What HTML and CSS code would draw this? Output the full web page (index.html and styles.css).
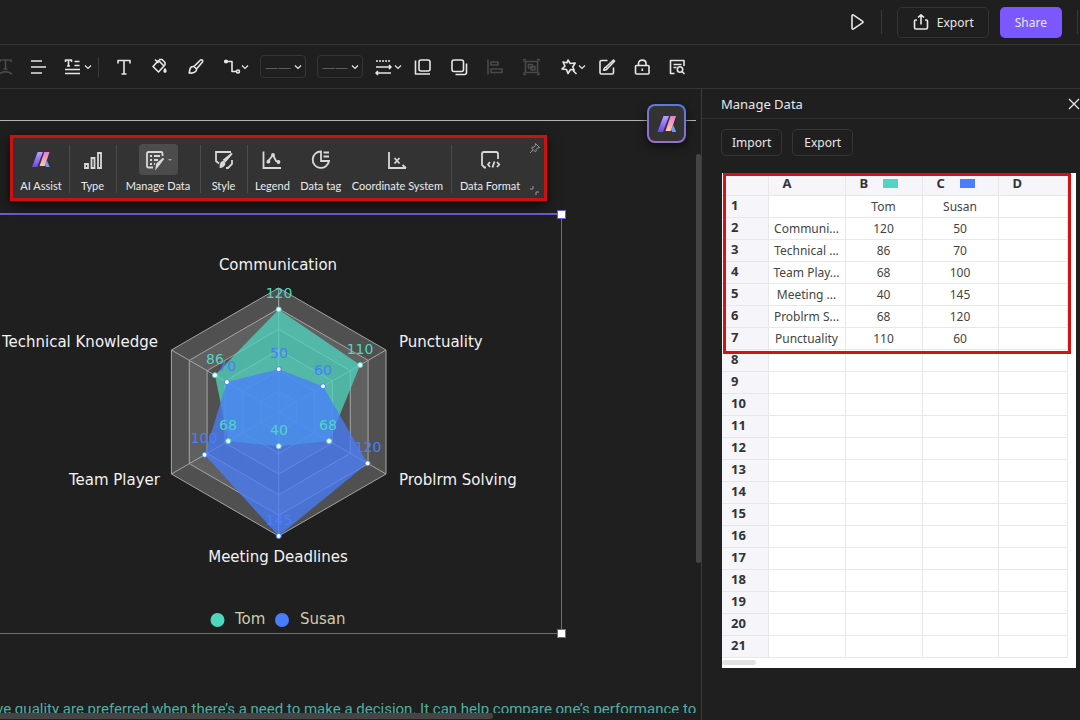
FILE: index.html
```html
<!DOCTYPE html>
<html lang="en">
<head>
<meta charset="utf-8">
<title>Manage Data</title>
<link rel="stylesheet" href="styles.css">
</head>
<body>
<svg width="0" height="0" class="defs" aria-hidden="true">
  <defs>
    <linearGradient id="g-left" x1="0" y1="0" x2="0" y2="1"><stop offset="0" stop-color="#b9a2ff"/><stop offset="1" stop-color="#6a45f0"/></linearGradient>
    <linearGradient id="g-right" x1="0" y1="0" x2="0" y2="1"><stop offset="0" stop-color="#e77bd8"/><stop offset="1" stop-color="#ffc9a0"/></linearGradient>
    <symbol id="logo" viewBox="0 0 20 18">
      <path d="M6.500 1h5.500L6 17H.5z" fill="url(#g-left)"/>
      <path d="M13.500 1h5.500L14 16H8.500z" fill="url(#g-right)"/>
      <path d="M16.300 10l2.900 7h-3.900L14 14z" fill="#6d9cf5"/>
    </symbol>
    <symbol id="chev" viewBox="0 0 8 8"><path d="M1 2.500l3 3 3-3"/></symbol>
  </defs>
</svg>
<div class="app">
  <header class="topbar">
    <button class="icon-btn" aria-label="Play"><svg class="ic" viewBox="0 0 18 18"><path d="M4 3c0-1 .8-1.400 1.600-.9l8.800 6c.8.500.8 1.300 0 1.800l-8.800 6C4.800 16.400 4 16 4 15z"/></svg></button>
    <span class="sep"></span>
    <button class="export-btn"><svg class="ic" viewBox="0 0 18 18"><path d="M5 7H3.500C2.700 7 2.500 7.500 2.500 8v6.500c0 .8.500 1.500 1.500 1.500h10c1 0 1.500-.7 1.500-1.500V8c0-.5-.2-1-1-1H13M9 11.500V2M6 4.500L9 1.800l3 2.700"/></svg>Export</button>
    <button class="share-btn">Share</button>
    <span class="sep last"></span>
  </header>

  <nav class="tools" aria-label="Formatting">
    <div class="group g-text">
      <button class="icon-btn dim" aria-label="Text on path"><svg class="ic" viewBox="0 0 18 18"><path d="M4 4V2h11v2M9.500 2v9M7.500 11h4M3 16c4-3 9-3 13 0"/></svg></button>
      <button class="icon-btn" aria-label="Align"><svg class="ic" viewBox="0 0 18 18"><path d="M1 3h11M1 9h15M1 15h11"/></svg></button>
      <button class="icon-btn drop" aria-label="Text layout"><svg class="ic" viewBox="0 0 18 18"><path d="M1.500 4V2h6v2M4.500 2v6M3 8h3M10.500 3.500h5M10.500 7.500h5M1 11.500h15M1 15.500h15"/></svg><svg class="chev"><use href="#chev"/></svg></button>
      <span class="sep small"></span>
    </div>
    <div class="group g-style">
      <button class="icon-btn" aria-label="Font colour"><svg class="ic" viewBox="0 0 18 18"><path d="M3 5.500V2.500h12v3M9 2.500v13.500M6.500 16h5"/></svg></button>
      <button class="icon-btn" aria-label="Fill"><svg class="ic" viewBox="0 0 18 18"><path d="M7.500 2.500l5.500 5.500-5.500 6L2 8.500zM4 1.500l3.500 3.500M8 1.500h3l3 3v3"/><path class="solid" d="M14 11c1 1.500 1.200 3 0 3s-1-1.500 0-3z"/></svg></button>
      <button class="icon-btn" aria-label="Brush"><svg class="ic" viewBox="0 0 18 18"><path d="M7 8.500L13.500 2c1.500-.8 2.800.5 2 2L9.500 11zM7 8.500c-2-.3-3.500.5-4 2.500l-.8 4c2 .3 4 .2 5.500-.8S9.800 12 9.500 11"/></svg></button>
      <button class="icon-btn drop tight" aria-label="Connector"><svg class="ic" viewBox="0 0 18 18"><path d="M4 3.500h5v10h5"/><circle class="solid" cx="3" cy="3.500" r="1.300"/><circle cx="15" cy="13.500" r="1.500"/></svg><svg class="chev"><use href="#chev"/></svg></button>
    </div>
    <div class="group g-line">
      <label class="line-select"><select aria-label="Line style"><option>——</option></select><svg class="chev"><use href="#chev"/></svg></label>
      <label class="line-select"><select aria-label="Line width"><option>——</option></select><svg class="chev"><use href="#chev"/></svg></label>
      <button class="icon-btn drop" aria-label="Line ends"><svg class="ic" viewBox="0 0 18 18"><path d="M2 3h15" stroke-dasharray="2 1"/><path d="M2 9h15M2 15h15M15 7l2 2-2 2M4 13l-2 2 2 2"/></svg><svg class="chev"><use href="#chev"/></svg></button>
    </div>
    <div class="group g-arrange">
      <button class="icon-btn" aria-label="Bring forward"><svg class="ic" viewBox="0 0 18 18"><rect x="5" y="2" width="11" height="11" rx="2"/><path d="M1.500 2.500V16H16"/></svg></button>
      <button class="icon-btn" aria-label="Send back"><svg class="ic" viewBox="0 0 18 18"><rect x="2" y="2" width="11.500" height="11.500" rx="2"/><path d="M16.500 5.500v9c0 1.500-.5 2-2 2h-9"/></svg></button>
      <button class="icon-btn dim" aria-label="Align shapes"><svg class="ic" viewBox="0 0 18 18"><path d="M2 1.500v15M5 4h7v3H5zM5 11h11v3.500H5z"/></svg></button>
      <button class="icon-btn dim" aria-label="Group"><svg class="ic" viewBox="0 0 18 18"><rect x="3.500" y="3.500" width="12" height="11"/><rect x="6.500" y="6.500" width="4" height="3.500"/><rect x="9" y="8.500" width="4" height="3.500"/><path d="M2 3.500v-2h2M17 3.500v-2h-2M2 14.500v2h2M17 14.500v2h-2"/></svg></button>
    </div>
    <div class="group g-end">
      <button class="icon-btn drop tight" aria-label="Effects"><svg class="ic" viewBox="0 0 18 18"><path d="M8 2l2.200 3.500 5-.5-2.500 4 1.500 3-3.700-.5L8 15.500l-1.500-4L2 11l3-3L3 4l4 .800zM13 12.500l3.500 3.500"/></svg><svg class="chev"><use href="#chev"/></svg></button>
      <span class="gap"></span>
      <button class="icon-btn" aria-label="Edit"><svg class="ic" viewBox="0 0 18 18"><path d="M9.500 2.500H3.500c-1 0-1.500.5-1.500 1.500v10.500c0 1 .5 1.500 1.500 1.500H14c1 0 1.500-.5 1.500-1.500V9.500M8 9l7.500-7 1 1.300L9.500 10.500zM8 9c-1.500 0-1.500 2-2.500 3 2 .3 3.500 0 4-1.500"/></svg></button>
      <button class="icon-btn" aria-label="Lock"><svg class="ic" viewBox="0 0 18 18"><rect x="2.500" y="7.500" width="13.500" height="8.500" rx="1"/><path d="M5.500 7.500V5.500c0-4.500 7.500-4.500 7.500 0v2M9.300 10.500v2.500"/></svg></button>
      <button class="icon-btn" aria-label="Find"><svg class="ic" viewBox="0 0 18 18"><path d="M6.500 15.500H2.500V2.500h13.500V8M5.500 6.500h8M5.500 9.500h3M14 13.500l2.500 2.500"/><circle cx="12" cy="11.500" r="2.700"/></svg></button>
    </div>
  </nav>

  <main class="work">
    <section class="canvas" aria-label="Canvas">
      <div class="page-edge"></div>

      <svg class="chart" viewBox="0 213 562 420" role="img" aria-label="Radar chart comparing Tom and Susan">
        <g class="rings">
          <polygon class="odd" points="278.700,288 386,350 386,474 278.700,536 171.400,474 171.400,350"/>
          <polygon class="even" points="278.700,308.700 368.100,360.300 368.100,463.700 278.700,515.300 189.300,463.700 189.300,360.300"/>
          <polygon class="odd" points="278.700,329.300 350.300,370.700 350.300,453.300 278.700,494.700 207.100,453.300 207.100,370.700"/>
          <polygon class="even" points="278.700,350 332.400,381 332.400,443 278.700,474 225,443 225,381"/>
          <polygon class="odd" points="278.700,370.700 314.500,391.300 314.500,432.700 278.700,453.300 242.900,432.700 242.900,391.300"/>
          <polygon class="even" points="278.700,391.300 296.600,401.700 296.600,422.300 278.700,432.700 260.800,422.300 260.800,401.700"/>
          <path d="M278.700 288v248M171.400 350L386 474M386 350L171.400 474"/>
        </g>
        <polygon class="tom area" points="278.700,309.400 360.200,365 329.100,441.100 278.700,446.200 228.300,441.100 215,375.200"/>
        <polygon class="susan area" points="278.700,369.200 323.100,386.300 367.600,463.300 278.700,536 204.600,454.800 226.900,382.100"/>
        <g class="dots dots-tom"><circle cx="278.700" cy="309.400" r="2.500"/><circle cx="360.200" cy="365" r="2.500"/><circle cx="329.100" cy="441.100" r="2.500"/><circle cx="278.700" cy="446.200" r="2.500"/><circle cx="228.300" cy="441.100" r="2.500"/><circle cx="215" cy="375.200" r="2.500"/></g>
        <g class="dots dots-susan"><circle cx="278.700" cy="369.200" r="2.500"/><circle cx="323.100" cy="386.300" r="2.500"/><circle cx="367.600" cy="463.300" r="2.500"/><circle cx="278.700" cy="536" r="2.500"/><circle cx="204.600" cy="454.800" r="2.500"/><circle cx="226.900" cy="382.100" r="2.500"/></g>
        <g class="val v-susan"><text x="279" y="358">50</text><text x="323" y="375">60</text><text x="368" y="452">120</text><text x="279" y="525">145</text><text x="204" y="443">100</text><text x="227" y="371">70</text></g>
        <g class="val v-tom"><text x="279" y="298">120</text><text x="360" y="354">110</text><text x="328" y="430">68</text><text x="279" y="435">40</text><text x="228" y="430">68</text><text x="215" y="364">86</text></g>
        <g class="axis-name">
          <text class="mid" x="278" y="270">Communication</text>
          <text x="399" y="347">Punctuality</text>
          <text x="399" y="485">Problrm Solving</text>
          <text class="mid" x="278" y="562">Meeting Deadlines</text>
          <text class="end" x="160" y="485">Team Player</text>
          <text class="end" x="158" y="347">Technical Knowledge</text>
        </g>
        <g class="legend"><circle class="tom" cx="217.500" cy="620" r="7"/><text x="235" y="624">Tom</text><circle class="susan" cx="282" cy="620" r="7"/><text x="300" y="624">Susan</text></g>
      </svg>
      <div class="selection"><span class="handle h-top"></span><span class="handle h-bottom"></span></div>

      <div class="floating" role="toolbar" aria-label="Chart tools">
        <button class="fbtn w-ai"><svg class="fi logo-sm"><use href="#logo"/></svg>AI Assist</button>
        <button class="fbtn w-type"><span class="ibox"><svg class="fi" viewBox="0 0 22 22"><path d="M3 15h3v4H3zM9.500 9h3v10h-3zM16 4h3v15h-3z"/></svg></span>Type</button>
        <button class="fbtn w-manage"><span class="ibox active"><svg class="fi" viewBox="0 0 22 22"><path d="M9 18.500H4.500c-1 0-1.500-.5-1.500-1.500V4.500C3 3.500 3.500 3 4.500 3H17c1 0 1.500.5 1.500 1.500V7M6 7h2M10 7h6M6 11h2M10 11h4M6 15h2M10 15h1"/><path class="solid" d="M19.500 9.500l-4.500 6-2.500 3 .5-3.500z"/></svg><i class="caret"></i></span>Manage Data</button>
        <button class="fbtn w-style"><span class="ibox"><svg class="fi" viewBox="0 0 22 22"><path d="M6 14.500L3 12V3h15M19 11v4l-4 4h-2"/><path class="solid" d="M19 4.500l-6.500 7.500-1.500-1zM10.500 13c-2 0-3 2-3 5 2 0 4-1.500 4-4z"/></svg></span>Style</button>
        <div class="fset">
          <button class="fbtn"><span class="ibox"><svg class="fi" viewBox="0 0 22 22"><path d="M2.500 2.500v16.500H20M6 14l2-3 4-5 3 6 3 1"/><circle class="solid" cx="7.500" cy="12.500" r="1"/><circle class="solid" cx="12" cy="6" r="1"/><circle class="solid" cx="17.500" cy="13" r="1"/></svg></span>Legend</button>
          <button class="fbtn"><span class="ibox"><svg class="fi" viewBox="0 0 22 22"><path d="M11 2.500a8.200 8.200 0 1 0 8 9.500h-8zM13.500 3.500H19M13.500 7.500H19"/></svg></span>Data tag</button>
          <button class="fbtn"><span class="ibox"><svg class="fi" viewBox="0 0 22 22"><path d="M3 3v16h17M16.500 16l3.500 3M8.500 9l5 5.500M13.500 9l-5 5.500"/></svg></span>Coordinate System</button>
        </div>
        <button class="fbtn w-format"><span class="ibox"><svg class="fi" viewBox="0 0 22 22"><path d="M7 18.500H5.500L3 16V5c0-1.500.5-2 2-2h12c1.500 0 2 .5 2 2v5M11 13l-2 2.500 2 2.500M15.500 12.500l-2 6M18 13l2.200 2.500L18 18"/></svg></span>Data Format</button>
        <div class="fside">
          <button class="pin" aria-label="Pin"><svg viewBox="0 0 12 12"><path d="M6.500 1.500l4 4-2 .5L7 7.500l.3 1.500-1 .8L2.500 6l1-1L5 5.200 6.300 3.500zM4 8L1 11"/></svg></button>
          <svg class="shrink" viewBox="0 0 12 12"><path d="M4 1v3H1M7 10V7h3"/></svg>
        </div>
      </div>

      <button class="ai-badge" aria-label="AI"><svg><use href="#logo"/></svg></button>
      <p class="note">ve quality are preferred when there’s a need to make a decision. It can help compare one’s performance to</p>
      <span class="vscroll"></span>
      <span class="hscroll"></span>
    </section>

    <aside class="panel">
      <div class="panel-head"><h2>Manage Data</h2><button class="close" aria-label="Close"><svg viewBox="0 0 12 12"><path d="M1 1l10 10M11 1L1 11"/></svg></button></div>
      <div class="panel-actions"><button>Import</button><button>Export</button></div>
      <div class="sheet">
        <table>
          <colgroup><col class="c-num"><col class="c-a"><col class="c-b"><col class="c-c"><col></colgroup>
          <thead><tr><th></th><th>A</th><th>B<i class="swatch tom-bg"></i></th><th>C<i class="swatch susan-bg"></i></th><th>D</th></tr></thead>
          <tbody>
            <tr><th>1</th><td></td><td>Tom</td><td>Susan</td><td></td></tr>
            <tr><th>2</th><td>Communi...</td><td>120</td><td>50</td><td></td></tr>
            <tr><th>3</th><td>Technical ...</td><td>86</td><td>70</td><td></td></tr>
            <tr><th>4</th><td>Team Play...</td><td>68</td><td>100</td><td></td></tr>
            <tr><th>5</th><td>Meeting ...</td><td>40</td><td>145</td><td></td></tr>
            <tr><th>6</th><td>Problrm S...</td><td>68</td><td>120</td><td></td></tr>
            <tr><th>7</th><td>Punctuality</td><td>110</td><td>60</td><td></td></tr>
            <tr><th>8</th><td></td><td></td><td></td><td></td></tr>
            <tr><th>9</th><td></td><td></td><td></td><td></td></tr>
            <tr><th>10</th><td></td><td></td><td></td><td></td></tr>
            <tr><th>11</th><td></td><td></td><td></td><td></td></tr>
            <tr><th>12</th><td></td><td></td><td></td><td></td></tr>
            <tr><th>13</th><td></td><td></td><td></td><td></td></tr>
            <tr><th>14</th><td></td><td></td><td></td><td></td></tr>
            <tr><th>15</th><td></td><td></td><td></td><td></td></tr>
            <tr><th>16</th><td></td><td></td><td></td><td></td></tr>
            <tr><th>17</th><td></td><td></td><td></td><td></td></tr>
            <tr><th>18</th><td></td><td></td><td></td><td></td></tr>
            <tr><th>19</th><td></td><td></td><td></td><td></td></tr>
            <tr><th>20</th><td></td><td></td><td></td><td></td></tr>
            <tr><th>21</th><td></td><td></td><td></td><td></td></tr>
          </tbody>
        </table>
        <div class="sheet-scroll"><span></span></div>
        <div class="highlight"></div>
      </div>
    </aside>
  </main>
</div>
</body>
</html>
```
FILE: styles.css
```css
* { box-sizing: border-box; }
body { margin: 0; background: #1f1f1f; color: #e8e8e8; font-family: "Noto Sans", "Open Sans", sans-serif; font-size: 12px; overflow: hidden; }
button { font: inherit; color: inherit; background: none; border: 0; padding: 0; }
svg { display: block; fill: none; stroke: currentColor; }
.defs { position: absolute; }
.app { display: flex; flex-direction: column; height: 100vh; }

.topbar { display: flex; align-items: center; justify-content: flex-end; height: 45px; flex: none; border-bottom: 1px solid #363636; padding-right: 2px; }
.icon-btn { display: flex; align-items: center; flex: none; color: #e6e6e6; }
.ic { width: 18px; height: 18px; stroke-width: 1.600; stroke-linejoin: round; }
.solid { fill: currentColor; }
.dim { color: #4a4a4a; }
.sep { width: 1px; height: 24px; background: #3a3a3a; margin: 0 15px; }
.last { margin-right: 0; }
.export-btn { display: flex; align-items: center; gap: 7px; height: 31px; padding: 0 14px; border: 1px solid #353535; border-radius: 5px; margin-right: 11px; }
.share-btn { height: 31px; padding: 0 15px; border-radius: 5px; background: #7b57ff; }

.tools { display: flex; align-items: center; height: 44px; flex: none; border-bottom: 1px solid #363636; }
.group { display: flex; align-items: center; flex: none; }
.g-text { gap: 16px; margin-left: -4px; }
.g-style { gap: 18px; }
.g-line { gap: 11px; margin-left: 11px; }
.g-arrange { gap: 18px; margin-left: 12px; }
.g-end { gap: 17px; margin-left: 20px; }
.small { height: 20px; margin: 0 16px 0 -10px; }
.gap { margin-left: -22px; }
.drop { gap: 2px; }
.tight { gap: 0; }
.chev { width: 8px; height: 8px; stroke-width: 1.200; }
.line-select { position: relative; }
.line-select select { display: block; appearance: none; width: 46px; height: 23px; border: 1px solid #353535; border-radius: 4px; background: none; color: #5c5c5c; font: 13px "Noto Sans", sans-serif; padding: 0 0 0 4px; }
.line-select .chev { position: absolute; right: 4px; top: 8px; pointer-events: none; }

.work { display: flex; flex: 1; min-height: 0; }
.canvas { position: relative; flex: 1; min-width: 0; overflow: hidden; }
.page-edge { position: absolute; left: 0; right: 5px; top: 31px; border-top: 1px solid #b4b4b4; }
.chart { position: absolute; left: 0; top: 124px; width: 562px; height: 420px; stroke: none; font-family: "DejaVu Sans", sans-serif; }
.rings polygon, .rings path { stroke: #a5a5a5; stroke-width: 1; }
.odd { fill: #505050; }
.even { fill: #606060; }
.area { opacity: 0.75; }
.tom { fill: #4fd6c0; }
.susan { fill: #487dff; }
.dots circle { fill: #fff; stroke-width: 1; }
.dots-tom circle { stroke: #4fd6c0; }
.dots-susan circle { stroke: #487dff; }
.val { font-size: 14px; text-anchor: middle; }
.v-susan { fill: #487dff; }
.v-tom { fill: #4fd6c0; }
.axis-name { font-size: 15px; fill: #f2f2f2; }
.mid { text-anchor: middle; }
.end { text-anchor: end; }
.legend { font-size: 15px; }
.legend text { fill: #d0ccac; }
.selection { position: absolute; left: -2px; top: 124px; width: 564px; height: 421px; border: 1px solid #6d58e0; border-top-width: 2px; }
.handle { position: absolute; right: -5px; width: 9px; height: 9px; background: #fff; border: 1px solid #6d58e0; }
.h-top { top: -5px; }
.h-bottom { bottom: -5px; }

.floating { position: absolute; left: 10px; top: 46px; display: flex; height: 66px; border: 3px solid #cf1010; background: #333; box-shadow: 0 4px 12px #000a; font-family: Lato, "Noto Sans", sans-serif; font-size: 11px; color: #ececec; }
.fbtn { display: flex; flex-direction: column; align-items: center; gap: 4px; padding-top: 6px; white-space: nowrap; }
.fbtn + .fbtn, .fset, .w-format { position: relative; }
.fbtn + .fbtn::before, .fset::before, .w-format::before { content: ""; position: absolute; left: 0; top: 7px; height: 48px; border-left: 1px solid #4a4a4a; }
.fset .fbtn::before { display: none; }
.w-ai { width: 56px; }
.w-type { width: 47px; }
.w-manage { width: 84px; }
.w-style { width: 47px; }
.w-format { width: 78px; }
.fset { display: flex; width: 204px; justify-content: space-between; padding: 0 8px; }
.ibox { display: flex; align-items: center; justify-content: center; height: 31px; }
.active { width: 39px; background: #4c4c4c; border-radius: 4px; gap: 2px; }
.caret { border: 2px solid transparent; border-top-color: #aaa; border-bottom: 0; }
.fi { width: 22px; height: 22px; stroke-width: 1.800; color: #d8d8d8; }
.logo-sm { width: 20px; height: 31px; padding: 7px 0; stroke: none; }
.fside { width: 15px; display: flex; flex-direction: column; justify-content: space-between; align-items: flex-start; padding: 4px 0 1px; color: #999; }
.pin svg, .shrink { width: 12px; height: 12px; }

.ai-badge { position: absolute; right: 15px; top: 15px; width: 39px; height: 39px; display: flex; align-items: center; justify-content: center; border: 2px solid transparent; border-radius: 8px; background: linear-gradient(#333, #333) padding-box, linear-gradient(200deg, #4d7ddb, #a86bd0) border-box; box-shadow: 0 3px 10px #0009; }
.ai-badge svg { width: 20px; height: 18px; stroke: none; }
.note { position: absolute; left: -4px; right: 5px; bottom: 7px; height: 15px; margin: 0; overflow: hidden; white-space: nowrap; font-family: Roboto, sans-serif; font-size: 15px; line-height: 22px; color: #50aea2; }
.vscroll { position: absolute; right: 0; top: 65px; width: 5px; height: 409px; border-radius: 3px; background: #454545; }
.hscroll { position: absolute; left: 0; bottom: 1px; width: 493px; height: 6px; border-radius: 0 3px 3px 0; background: #454545; }

.panel { width: 379px; flex: none; border-left: 1px solid #3c3c3c; }
.panel-head { display: flex; align-items: center; justify-content: space-between; height: 30px; border-bottom: 1px solid #303030; padding-left: 19px; }
.panel-head h2 { margin: 0; font-size: 13px; font-weight: 400; }
.close svg { width: 12px; height: 12px; stroke-width: 1.300; }
.panel-actions { display: flex; gap: 10px; padding: 10px 19px 17px; }
.panel-actions button { height: 27px; min-width: 61px; padding: 0 10px; border: 1px solid #363636; border-radius: 5px; }

.sheet { position: relative; margin: 0 4px 0 20px; padding-right: 8px; background: #fff; color: #444; }
table { width: 100%; border-collapse: collapse; table-layout: fixed; }
.c-num { width: 46px; }
.c-a, .c-b { width: 77px; }
.c-c { width: 76px; }
tr { height: 22px; }
th, td { padding: 0; border-right: 1px solid #e8e8ea; border-bottom: 1px solid #e8e8ea; line-height: 17px; }
th { background: #f5f5fa; color: #333; font-size: 13px; font-weight: 700; text-align: left; padding-left: 9px; }
thead th { padding-left: 14px; }
tbody th { padding-bottom: 1px; }
td { font-size: 12px; text-align: center; white-space: nowrap; }
.swatch { display: inline-block; width: 15px; height: 9px; margin-left: 15px; }
.tom-bg { background: #4fd6c0; }
.susan-bg { background: #487dff; }
.sheet-scroll { height: 10px; padding-top: 2px; }
.sheet-scroll span { display: block; width: 34px; height: 5px; border-radius: 3px; background: #e2e2e4; }
.highlight { position: absolute; left: 1px; right: 5px; top: 0; height: 181px; border: 3px solid #d01414; }
```
